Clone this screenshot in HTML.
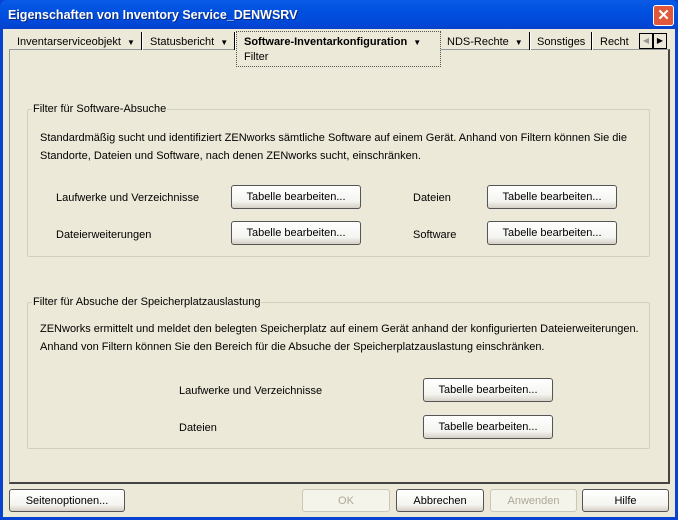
<!DOCTYPE html>
<html><head><meta charset="utf-8"><style>
*{margin:0;padding:0;box-sizing:border-box}
body{width:678px;height:520px;overflow:hidden;font-family:"Liberation Sans",sans-serif;font-size:11px;color:#000;background:#0842d0;position:relative}
.a{position:absolute}
.win{left:3px;top:29px;width:672px;height:488px;background:#ece9d8}
.title{left:0;top:0;width:678px;height:30px;background:linear-gradient(#0a5ae6,#0050e0 40%,#0346d6 85%,#0a3fc0);border-radius:7px 7px 0 0}
.title span{position:absolute;left:8px;top:8px;color:#fff;font-weight:bold;font-size:12.5px;text-shadow:1px 1px #0a2a80}
.close{left:653px;top:5px;width:21px;height:21px;background:#e0583a;border:1px solid #fff;border-radius:3px;color:#fff;font-weight:bold;font-size:15px;text-align:center;line-height:19px}
.panel{left:9px;top:49px;width:661px;height:435px;border:1px solid #919b9c;border-right:2px solid #444;border-bottom:2px solid #444;background:#ece9d8}
.tab{top:34px;height:18px;line-height:17px;white-space:nowrap}
.sep{top:32px;width:2px;height:18px;border-left:1px solid #000;border-right:1px solid #fff}
.dd{font-size:8px;margin-left:6px}
.grp{border:1px solid #d0d0bf;border-radius:2px}
.gl{background:#ece9d8;padding:0 1px}
.btn{border:1px solid #555;border-radius:3px;background:linear-gradient(#fff,#f4f4f0 70%,#d6d0c5);text-align:center;line-height:22px}
.dis{color:#aca899;border-color:#c9c7ba;background:#f5f4ea}
</style></head><body>
<div class="a title"><span>Eigenschaften von Inventory Service_DENWSRV</span></div>
<div class="a close">✕</div>
<div class="a win"></div>
<div class="a panel"></div>
<div class="a tab" style="left:17px">Inventarserviceobjekt<span class="dd">▼</span></div>
<div class="a sep" style="left:141px"></div>
<div class="a tab" style="left:150px">Statusbericht<span class="dd">▼</span></div>
<div class="a sep" style="left:234px"></div>
<div class="a" style="left:236px;top:31px;width:205px;height:36px;border:1px dotted #555;background:#ece9d8"></div>
<div class="a tab" style="left:244px;font-weight:bold">Software-Inventarkonfiguration<span class="dd">▼</span></div>
<div class="a" style="left:244px;top:51px">Filter</div>
<div class="a tab" style="left:447px">NDS-Rechte<span class="dd">▼</span></div>
<div class="a sep" style="left:529px"></div>
<div class="a tab" style="left:537px">Sonstiges</div>
<div class="a sep" style="left:591px"></div>
<div class="a tab" style="left:600px;width:29px;overflow:hidden">Recht</div>
<div class="a" style="left:639px;top:33px;width:14px;height:16px;border:1px solid #000;background:#ece9d8;color:#999;font-size:8px;text-align:center;line-height:14px">◀</div>
<div class="a" style="left:653px;top:33px;width:14px;height:16px;border:1px solid #000;background:#ece9d8;font-size:8px;text-align:center;line-height:14px">▶</div>

<div class="a grp" style="left:27px;top:109px;width:623px;height:148px"></div>
<div class="a gl" style="left:32px;top:103px">Filter für Software-Absuche</div>
<div class="a" style="left:40px;top:129px;line-height:18px;width:610px">Standardmäßig sucht und identifiziert ZENworks sämtliche Software auf einem Gerät. Anhand von Filtern können Sie die<br>Standorte, Dateien und Software, nach denen ZENworks sucht, einschränken.</div>
<div class="a" style="left:56px;top:192px">Laufwerke und Verzeichnisse</div>
<div class="a" style="left:56px;top:229px">Dateierweiterungen</div>
<div class="a" style="left:413px;top:192px">Dateien</div>
<div class="a" style="left:413px;top:229px">Software</div>
<div class="a btn" style="left:231px;top:185px;width:130px;height:24px">Tabelle bearbeiten...</div>
<div class="a btn" style="left:231px;top:221px;width:130px;height:24px">Tabelle bearbeiten...</div>
<div class="a btn" style="left:487px;top:185px;width:130px;height:24px">Tabelle bearbeiten...</div>
<div class="a btn" style="left:487px;top:221px;width:130px;height:24px">Tabelle bearbeiten...</div>

<div class="a grp" style="left:27px;top:302px;width:623px;height:147px"></div>
<div class="a gl" style="left:32px;top:296px">Filter für Absuche der Speicherplatzauslastung</div>
<div class="a" style="left:40px;top:320px;line-height:18px;width:610px">ZENworks ermittelt und meldet den belegten Speicherplatz auf einem Gerät anhand der konfigurierten Dateierweiterungen.<br>Anhand von Filtern können Sie den Bereich für die Absuche der Speicherplatzauslastung einschränken.</div>
<div class="a" style="left:179px;top:385px">Laufwerke und Verzeichnisse</div>
<div class="a" style="left:179px;top:422px">Dateien</div>
<div class="a btn" style="left:423px;top:378px;width:130px;height:24px">Tabelle bearbeiten...</div>
<div class="a btn" style="left:423px;top:415px;width:130px;height:24px">Tabelle bearbeiten...</div>

<div class="a btn" style="left:9px;top:489px;width:116px;height:23px">Seitenoptionen...</div>
<div class="a btn dis" style="left:302px;top:489px;width:88px;height:23px">OK</div>
<div class="a btn" style="left:396px;top:489px;width:88px;height:23px">Abbrechen</div>
<div class="a btn dis" style="left:490px;top:489px;width:87px;height:23px">Anwenden</div>
<div class="a btn" style="left:582px;top:489px;width:87px;height:23px">Hilfe</div>
</body></html>
